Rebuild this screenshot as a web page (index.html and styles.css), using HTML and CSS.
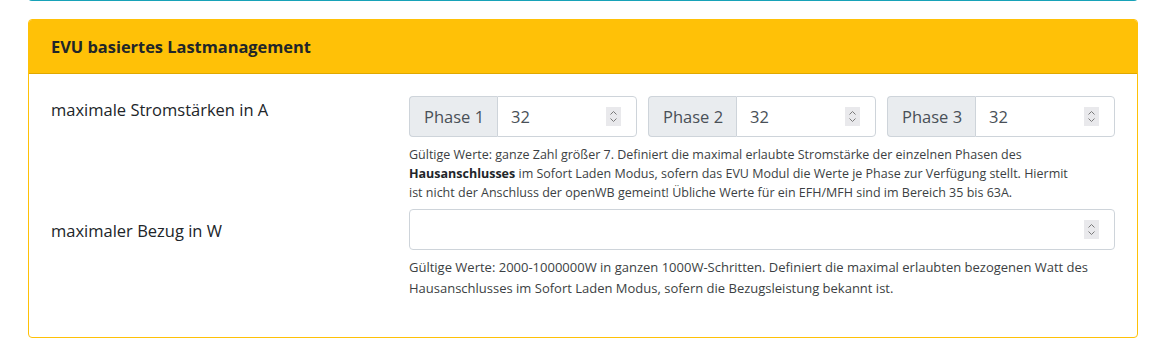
FILE: index.html
```html
<!DOCTYPE html>
<html lang="de">
   <head>
      <meta charset="utf-8">
      <title>EVU basiertes Lastmanagement</title>
      <link rel="stylesheet" href="styles.css">
   </head>
   <body>
      <div class="page">
        <!-- bottom edge of the card above -->
        <div class="prev-card"></div>

        <!-- EVU Card -->
        <div class="card">
          <div class="card-header">EVU basiertes Lastmanagement</div>
          <div class="card-body">

            <!-- Phasen -->
            <div class="form-row">
              <label class="form-label">maximale Stromstärken in A</label>
              <div class="form-field">
                <div class="phase-grid">
                  <div class="input-group">
                    <span class="prepend">Phase 1</span>
                    <div class="number-field">
                      <input type="text" value="32">
                      <span class="spinner"><svg width="15" height="19" viewBox="0 0 15 19"><rect width="15" height="19" fill="#e9e9ec"/><polyline points="4.5,7.5 7.5,4.5 10.5,7.5" fill="none" stroke="#7a7a7a" stroke-width="1"/><polyline points="4.5,11.5 7.5,14.5 10.5,11.5" fill="none" stroke="#7a7a7a" stroke-width="1"/></svg></span>
                    </div>
                  </div>
                  <div class="input-group">
                    <span class="prepend">Phase 2</span>
                    <div class="number-field">
                      <input type="text" value="32">
                      <span class="spinner"><svg width="15" height="19" viewBox="0 0 15 19"><rect width="15" height="19" fill="#e9e9ec"/><polyline points="4.5,7.5 7.5,4.5 10.5,7.5" fill="none" stroke="#7a7a7a" stroke-width="1"/><polyline points="4.5,11.5 7.5,14.5 10.5,11.5" fill="none" stroke="#7a7a7a" stroke-width="1"/></svg></span>
                    </div>
                  </div>
                  <div class="input-group">
                    <span class="prepend">Phase 3</span>
                    <div class="number-field">
                      <input type="text" value="32">
                      <span class="spinner"><svg width="15" height="19" viewBox="0 0 15 19"><rect width="15" height="19" fill="#e9e9ec"/><polyline points="4.5,7.5 7.5,4.5 10.5,7.5" fill="none" stroke="#7a7a7a" stroke-width="1"/><polyline points="4.5,11.5 7.5,14.5 10.5,11.5" fill="none" stroke="#7a7a7a" stroke-width="1"/></svg></span>
                    </div>
                  </div>
                </div>
                <small class="help">
                  Gültige Werte: ganze Zahl größer 7. Definiert die maximal erlaubte Stromstärke der einzelnen Phasen des<br>
                  <b>Hausanschlusses</b> im Sofort Laden Modus, sofern das EVU Modul die Werte je Phase zur Verfügung stellt. Hiermit<br>
                  ist nicht der Anschluss der openWB gemeint! Übliche Werte für ein EFH/MFH sind im Bereich 35 bis 63A.
                </small>
              </div>
            </div>

            <!-- Bezug -->
            <div class="form-row">
              <label class="form-label form-label-center">maximaler Bezug in W</label>
              <div class="form-field">
                <div class="number-field">
                  <input type="text" value="">
                  <span class="spinner"><svg width="15" height="19" viewBox="0 0 15 19"><rect width="15" height="19" fill="#e9e9ec"/><polyline points="4.5,7.5 7.5,4.5 10.5,7.5" fill="none" stroke="#7a7a7a" stroke-width="1"/><polyline points="4.5,11.5 7.5,14.5 10.5,11.5" fill="none" stroke="#7a7a7a" stroke-width="1"/></svg></span>
                </div>
                <small class="help help-loose">
                  Gültige Werte: 2000-1000000W in ganzen 1000W-Schritten. Definiert die maximal erlaubten bezogenen Watt des<br>
                  Hausanschlusses im Sofort Laden Modus, sofern die Bezugsleistung bekannt ist.
                </small>
              </div>
            </div>

          </div>
        </div>
      </div>
   </body>
</html>
```

FILE: styles.css
```css
/* Global Styles */
body {
    font-family: "Open Sans", Arial, sans-serif;
    margin: 0;
    padding: 0;
    background-color: #fff;
    color: #212529;
}

.page {
    width: 1110px;
    padding-left: 28px;
}

/* bottom of the previous card */
.prev-card {
    height: 4px;
    margin-top: -4px;
    border: 1px solid #17a2b8;
    border-top: none;
    border-radius: 0 0 4px 4px;
}

/* Card Styles */
.card {
    margin-top: 18px;
    border: 1px solid #ffc107;
    border-radius: 4px;
    overflow: hidden;
}

.card-header {
    background-color: #ffc107;
    border-bottom: 1px solid #e0a800;
    padding: 13px 22px 0 22px;
    height: 40px;
    font-size: 16.4px;
    font-weight: 700;
    line-height: 27px;
}

.card-body {
    padding: 22px 22px 38px 22px;
}

/* Form rows */
.form-row {
    display: grid;
    grid-template-columns: 358px 1fr;
    margin-bottom: 7px;
}

.form-row:last-child {
    margin-bottom: 0;
}

.form-label {
    font-size: 16.5px;
    line-height: 20px;
    padding-top: 4px;
}

.form-label-center {
    padding-top: 12px;
}

.form-field {
    min-width: 0;
}

.phase-grid {
    display: grid;
    grid-template-columns: repeat(3, minmax(0, 1fr));
    gap: 11px;
}

.input-group {
    display: flex;
    min-width: 0;
    height: 41px;
}

.prepend {
    display: flex;
    align-items: center;
    white-space: nowrap;
    padding: 0 13px 0 14px;
    background-color: #e9ecef;
    border: 1px solid #ced4da;
    border-right: none;
    border-radius: 4px 0 0 4px;
    color: #495057;
    font-size: 16.5px;
}

.number-field {
    flex: 1;
    min-width: 0;
    display: flex;
    align-items: center;
    height: 41px;
    box-sizing: border-box;
    border: 1px solid #ced4da;
    border-radius: 4px;
    background-color: #fff;
    padding: 0 15px 0 13px;
}

.input-group .number-field {
    height: auto;
    border-radius: 0 4px 4px 0;
}

.number-field input {
    flex: 1;
    width: 0;
    min-width: 0;
    border: none;
    outline: none;
    padding: 0;
    font-family: inherit;
    font-size: 16.5px;
    color: #495057;
    background: transparent;
}

.spinner {
    display: flex;
}

/* help text */
.help {
    display: block;
    margin-top: 8px;
    font-size: 12.5px;
    line-height: 19px;
    color: #3c3f43;
}

.help b {
    font-weight: 700;
    color: #212529;
}

.help-loose {
    font-size: 13px;
    line-height: 21px;
    margin-top: 7px;
}
```
